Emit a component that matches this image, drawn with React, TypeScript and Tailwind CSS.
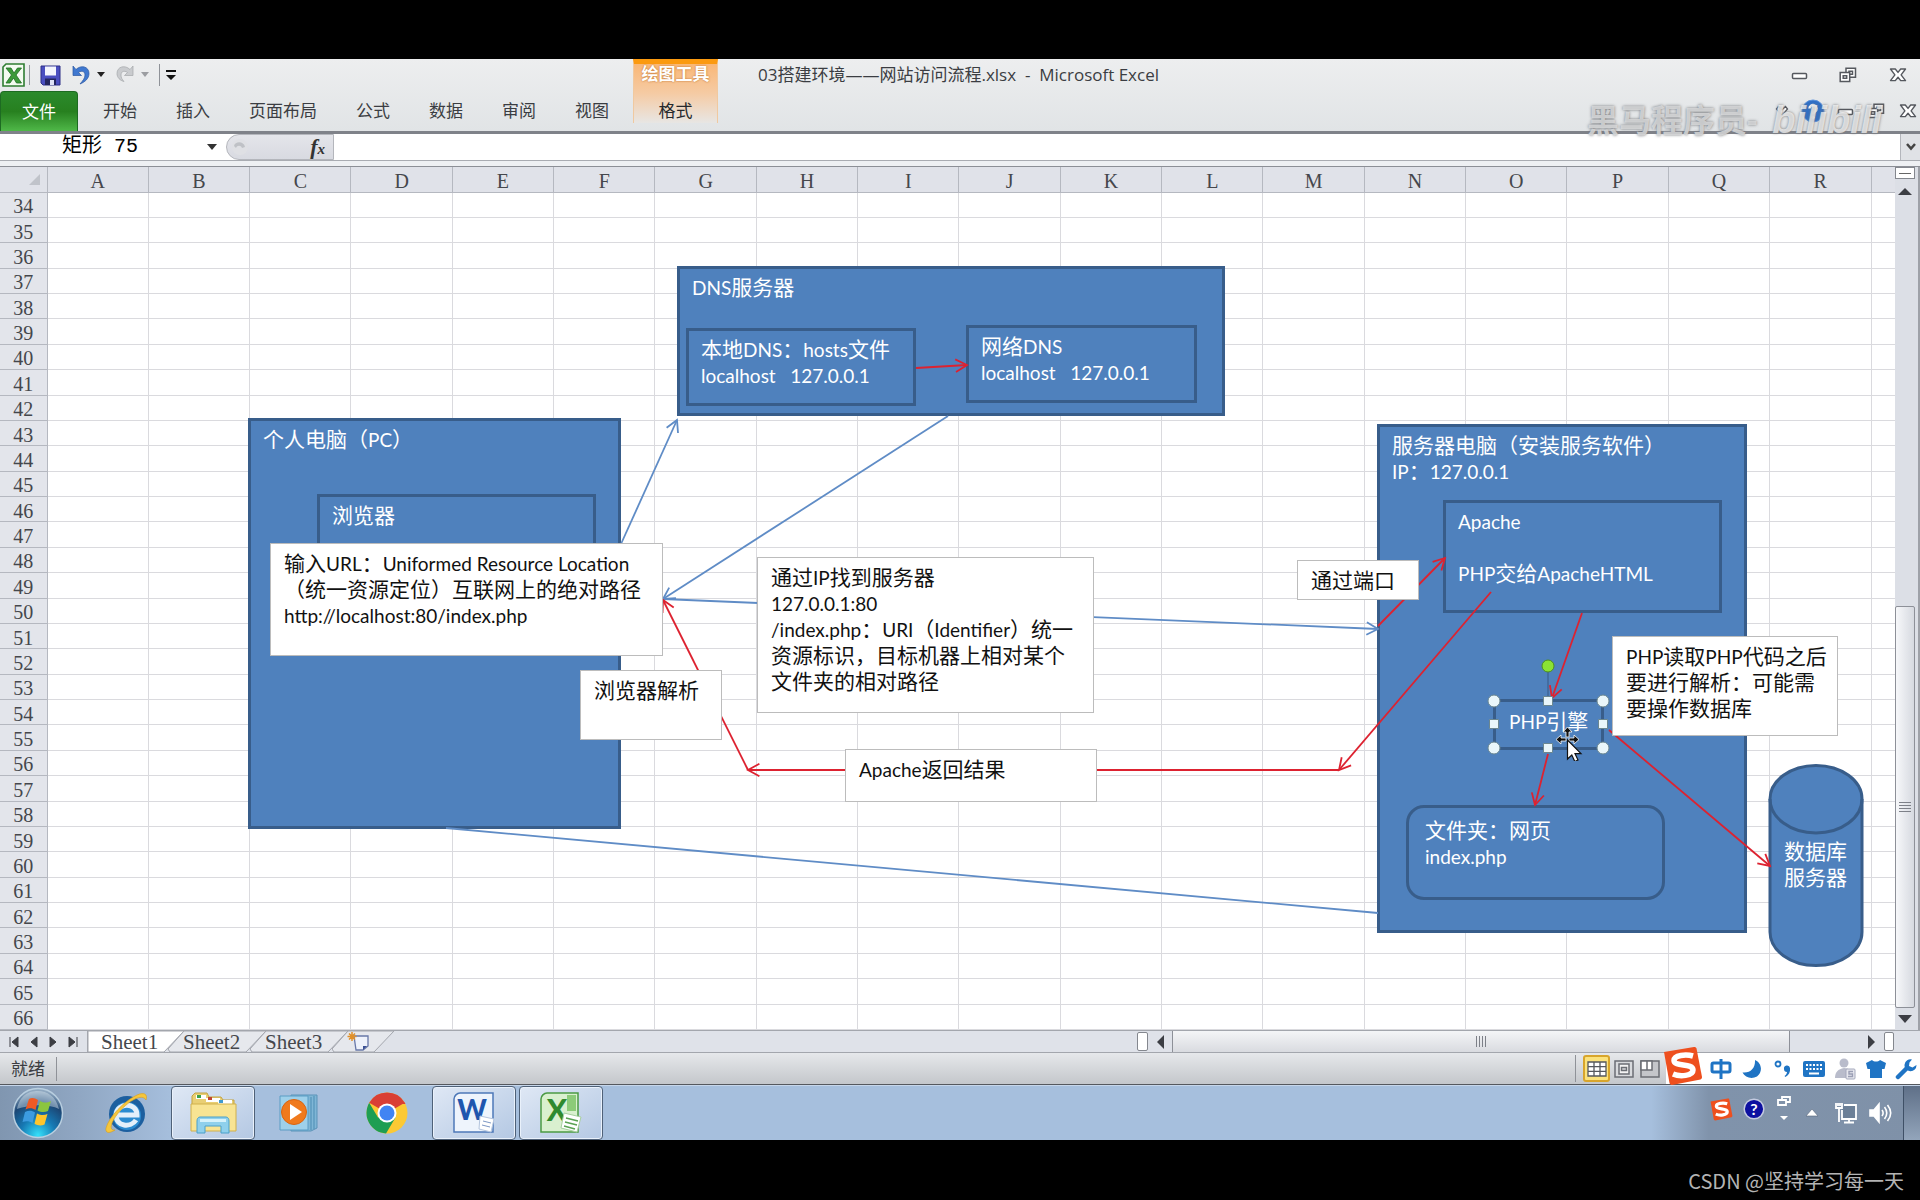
import React from "react";

const UI = "font-['Open_Sans','Noto_Sans_CJK_SC',sans-serif]";
const SERIF = "font-['Liberation_Serif','Noto_Sans_CJK_SC',serif]";
const SHAPE = "font-['Lato','Noto_Sans_CJK_SC',sans-serif]";

const COLUMNS = "ABCDEFGHIJKLMNOPQR".split("");
const ROWS = Array.from({ length: 33 }, (_, i) => 34 + i);
const TABS = ["开始", "插入", "页面布局", "公式", "数据", "审阅", "视图"];

/* ---------- window buttons ---------- */

function MinIcon() {
  return (
    <svg width="18" height="16" viewBox="0 0 18 16" fill="#fff" stroke="#55585e" strokeWidth="1.5">
      <rect x="1.5" y="6.5" width="14" height="5" rx="1" />
    </svg>
  );
}

function RestoreIcon() {
  return (
    <svg width="18" height="16" viewBox="0 0 18 16" fill="#fff" stroke="#55585e" strokeWidth="1.5">
      <path d="M7 1.2h9.5v9H7z" />
      <path d="M10 4.2h3.5v3H10z" />
      <path d="M1.2 5.5h9.5v9H1.2z" />
      <path d="M4.2 8.7h3.5v2.6H4.2z" />
    </svg>
  );
}

function CloseIcon() {
  return (
    <svg width="18" height="16" viewBox="0 0 18 16" fill="#fff" stroke="#55585e" strokeWidth="1.4" strokeLinejoin="round">
      <path d="M1.5 2h4.8L9 5.4 11.7 2h4.8l-4.4 5.8 4.4 5.8h-4.8L9 10.2l-2.7 3.4H1.5l4.4-5.8z" />
    </svg>
  );
}

function IconButton({ label, className = "", children }: { label: string; className?: string; children: React.ReactNode }) {
  return (
    <button aria-label={label} className={`flex shrink-0 items-center justify-center ${className}`}>
      {children}
    </button>
  );
}

/* ---------- ribbon ---------- */

function QuickAccess() {
  return (
    <div className="flex h-[32px] items-center pl-[2px]">
      <svg width="23" height="24" viewBox="0 0 23 24">
        <path d="M4 1h18v22H1V4z" fill="#f4fbf1" stroke="#2f7d32" strokeWidth="1.6" />
        <path d="M4 5h5l3 5 3.5-5h4L14 12l5.5 8h-5L11.500 15 8 20H4l5.500-8z" fill="#3d9a3a" stroke="#1f6d24" strokeWidth=".8" />
      </svg>
      <span className="ml-1 h-5 w-px bg-[#9a9da3]" />
      <IconButton label="保存" className="ml-[10px]">
        <svg width="21" height="21" viewBox="0 0 21 21">
          <path d="M1 1h19v19H3l-2-2z" fill="#4a4fc0" stroke="#2c2f86" />
          <path d="M5 1.500h11v9H5z" fill="#f3f5fd" />
          <path d="M5 13.500h11V20H5z" fill="#23265e" />
          <path d="M10 15h4v5h-4z" fill="#dfe3f6" />
        </svg>
      </IconButton>
      <IconButton label="撤消" className="ml-[11px]">
        <svg width="18" height="22" viewBox="0 0 18 22">
          <path d="M1 2v9.500h8.500L6.500 8.500C10 6 13 7.500 13 11c0 3-2 5.500-5 9 5-2 9-5.500 9-10.500C17 2.500 9 .5 4 5.500z" fill="#3f78d0" stroke="#2a56a0" strokeWidth=".7" />
        </svg>
      </IconButton>
      <IconButton label="撤消列表" className="ml-[6px]">
        <svg width="10" height="8" viewBox="0 0 10 8"><path d="M1 1h8L5 6z" fill="#222" /></svg>
      </IconButton>
      <IconButton label="恢复" className="ml-[10px]">
        <svg width="18" height="22" viewBox="0 0 18 22">
          <path d="M17 2v9.500H8.500l3-3C8 6 5 7.500 5 11c0 2.500 1 4.500 3 6.500-4-1-7-4-7-8C1 2.500 9 .5 14 5.500z" fill="#c9cbce" stroke="#a5a7ab" strokeWidth=".7" />
        </svg>
      </IconButton>
      <IconButton label="恢复列表" className="ml-[6px]">
        <svg width="10" height="8" viewBox="0 0 10 8"><path d="M1 1h8L5 6z" fill="#9b9da1" /></svg>
      </IconButton>
      <span className="ml-[9px] h-[22px] w-px bg-[#8f9298]" />
      <IconButton label="自定义快速访问工具栏" className="ml-[5px]">
        <svg width="12" height="12" viewBox="0 0 12 12" fill="#111"><path d="M1 1h10v2H1zM1 6h10l-5 5z" /></svg>
      </IconButton>
    </div>
  );
}

function Ribbon() {
  return (
    <header className={`relative flex h-[75px] shrink-0 border-b-[3px] border-[#7f8289] bg-linear-to-b from-[#edeeef] to-[#e1e4e6] text-[17px] text-[#3b3d42] ${UI}`}>
      <div className="flex shrink-0 flex-col">
        <QuickAccess />
        <nav className="flex flex-1 items-stretch">
          <button className="mr-[5px] w-[78px] rounded-t-[4px] border border-b-0 border-[#1d6b22] bg-linear-to-b from-[#2b8a2c] via-[#27801f] to-[#4fb848] text-white">文件</button>
          {TABS.map((t) => (
            <button key={t} className="pl-5 pr-[19px]">{t}</button>
          ))}
        </nav>
      </div>
      <div className="ml-[5px] flex h-[64px] w-[85px] shrink-0 flex-col border-x border-[#f0c9a0] border-t-[5px] border-t-[#fb9a10] bg-linear-to-b from-[#f9b776] via-[#f5cba4] to-[#e7e6e4]">
        <span className="h-5 text-center font-bold leading-5 text-white [text-shadow:0_0_2px_#b5651d]">绘图工具</span>
        <button className="flex-1 pt-[14px] leading-6 text-[#26282c]">格式</button>
      </div>
      <div className="flex min-w-0 flex-1 flex-col">
        <div className="flex h-[32px] items-center">
          <h1 className="ml-10 flex-1 truncate whitespace-pre">03搭建环境——网站访问流程.xlsx  -  Microsoft Excel</h1>
          <IconButton label="最小化" className="mr-[30px]"><MinIcon /></IconButton>
          <IconButton label="向下还原" className="mr-8"><RestoreIcon /></IconButton>
          <IconButton label="关闭" className="mr-[13px]"><CloseIcon /></IconButton>
        </div>
        <div className="flex flex-1 items-center justify-end">
          <IconButton label="功能区最小化" className="mr-3">
            <svg width="14" height="14" viewBox="0 0 14 14" fill="#fff" stroke="#55585e" strokeWidth="1.300"><path d="M1.500 5l2-2.500L7 5.800l3.500-3.300 2 2.500L7 11.500z" /></svg>
          </IconButton>
          <IconButton label="帮助" className="mr-3">
            <svg width="24" height="24" viewBox="0 0 24 24">
              <circle cx="12" cy="12" r="11" fill="#2f6fc6" stroke="#5b92dc" />
              <path d="M8.500 9.500a3.500 3.500 0 1 1 5.500 3c-1.400.9-2 1.500-2 2.800" fill="none" stroke="#fff" strokeWidth="2.600" />
              <circle cx="12" cy="18.300" r="1.600" fill="#fff" />
            </svg>
          </IconButton>
          <IconButton label="最小化窗口" className="mr-[12px]"><MinIcon /></IconButton>
          <IconButton label="还原窗口" className="mr-[14px]"><RestoreIcon /></IconButton>
          <IconButton label="关闭窗口" className="mr-[3px]"><CloseIcon /></IconButton>
        </div>
      </div>
      <div className="pointer-events-none absolute right-[38px] top-[40px] flex items-start gap-[15px] whitespace-nowrap text-[#dedfe0]/80 [text-shadow:0_0_3px_#77797c]">
        <span className="text-[32px] font-bold leading-[42px]">黑马程序员-</span>
        <span className="font-['Liberation_Sans',sans-serif] text-[38px] font-bold italic leading-[42px] text-white/70">bilibili</span>
      </div>
    </header>
  );
}

function FormulaBar() {
  return (
    <div className="flex h-[33px] shrink-0 border-b border-[#8c8f96] bg-[#eef0f3]">
      <div className="flex h-[27px] flex-1 border-b border-[#a9acb2] bg-white">
        <input aria-label="名称框" defaultValue="矩形 75" className="w-[200px] bg-transparent pl-[62px] font-['Liberation_Mono','Noto_Sans_CJK_SC',monospace] text-[20px] text-black outline-none" />
        <IconButton label="名称列表" className="w-[24px]">
          <svg width="12" height="8" viewBox="0 0 12 8"><path d="M1 1h10L6 7z" fill="#333" /></svg>
        </IconButton>
        <div className="ml-[2px] flex w-[108px] items-center justify-between rounded-l-full border border-[#b4b6bc] bg-linear-to-b from-[#e4e5ea] to-[#d8dae1] pl-1 pr-2">
          <svg width="20" height="20" viewBox="0 0 20 20"><circle cx="9" cy="10" r="8" fill="#dfe0e4" /><path d="M3 9c1-5 10-5 11 1l-3 1c-1-3-5-3-6 0z" fill="#bfc1c6" /></svg>
          <button aria-label="插入函数" className="font-['Liberation_Serif',serif] text-[22px] font-bold italic leading-none text-[#333]">f<span className="text-[15px]">x</span></button>
        </div>
        <input aria-label="编辑栏" className="min-w-0 flex-1 bg-white outline-none" />
        <IconButton label="展开编辑栏" className="w-5 border-l border-[#b4b6bc] bg-[#e0e2e6]">
          <svg width="12" height="10" viewBox="0 0 12 10" fill="none" stroke="#444" strokeWidth="2.500"><path d="M2 2l4 4.500L10 2" /></svg>
        </IconButton>
      </div>
    </div>
  );
}

/* ---------- drawing on the sheet ---------- */

function ShapeText({ lines }: { lines: string[] }) {
  return (
    <>
      {lines.map((line, i) => (
        <p key={i} className="h-[26px] whitespace-pre">
          {line.split(/([\x20-\x7e]+)/).map((part, j) =>
            /^[\x20-\x7e]+$/.test(part) ? <span key={j} className="text-[19px]">{part}</span> : part
          )}
        </p>
      ))}
    </>
  );
}

function Box({ at, pad = "px-[12px] pt-[5px]", lines = [] }: { at: string; pad?: string; lines?: string[] }) {
  return (
    <div className={`absolute border-[3px] border-[#385d8a] bg-[#4f81bd] text-white ${pad} ${at}`}>
      <ShapeText lines={lines} />
    </div>
  );
}

function Note({ at, lines }: { at: string; lines: string[] }) {
  return (
    <div className={`absolute border border-[#bcbcbc] bg-white px-[13px] pt-[6px] text-[#111] ${at}`}>
      <ShapeText lines={lines} />
    </div>
  );
}

type Line = { from: [number, number]; to: [number, number]; color: "red" | "blue"; head?: boolean };

const LINES: Line[] = [
  { from: [621, 352], to: [677, 228], color: "blue" },
  { from: [948, 224], to: [663, 407], color: "blue" },
  { from: [663, 407], to: [1378, 437], color: "blue" },
  { from: [446, 636], to: [1378, 721], color: "blue", head: false },
  { from: [916, 176], to: [967, 173], color: "red" },
  { from: [748, 578], to: [663, 408], color: "red" },
  { from: [1339, 578], to: [748, 578], color: "red" },
  { from: [1378, 434], to: [1445, 366], color: "red" },
  { from: [1491, 400], to: [1339, 578], color: "red" },
  { from: [1582, 421], to: [1552, 506], color: "red" },
  { from: [1548, 562], to: [1535, 613], color: "red" },
  { from: [1609, 538], to: [1770, 674], color: "red" },
];

function arrowHead([x1, y1]: [number, number], [x2, y2]: [number, number]) {
  const a = Math.atan2(y2 - y1, x2 - x1);
  const p = (d: number) => `${(x2 - 13 * Math.cos(a + d)).toFixed(1)} ${(y2 - 13 * Math.sin(a + d)).toFixed(1)}`;
  return `M${p(0.5)}L${x2} ${y2}L${p(-0.5)}`;
}

function Drawing() {
  return (
    <div className={`pointer-events-none absolute inset-x-0 bottom-0 top-[25px] overflow-hidden text-[21px] leading-[26px] ${SHAPE}`}>
      <Box at="left-[248px] top-[226px] h-[411px] w-[373px]" lines={["个人电脑（PC）"]} />
      <Box at="left-[317px] top-[302px] h-[120px] w-[279px]" lines={["浏览器"]} />
      <Box at="left-[677px] top-[74px] h-[150px] w-[548px]" lines={["DNS服务器"]} />
      <Box at="left-[686px] top-[136px] h-[78px] w-[230px]" lines={["本地DNS：hosts文件", "localhost   127.0.0.1"]} />
      <Box at="left-[966px] top-[133px] h-[78px] w-[231px]" lines={["网络DNS", "localhost   127.0.0.1"]} />
      <Box at="left-[1377px] top-[232px] h-[509px] w-[370px]" lines={["服务器电脑（安装服务软件）", "IP：127.0.0.1"]} />
      <Box at="left-[1443px] top-[308px] h-[113px] w-[279px]" lines={["Apache", "", "PHP交给ApacheHTML"]} />
      <Box at="left-[1406px] top-[613px] h-[95px] w-[259px] rounded-[18px]" pad="px-4 pt-[9px]" lines={["文件夹：网页", "index.php"]} />
      <Box at="left-[1493px] top-[507px] h-[51px] w-[111px]" pad="px-[13px] pt-[6px]" lines={["PHP引擎"]} />

      <svg className="absolute inset-0" width="1896" height="836" fill="none">
        <path d="M1770 607a46 33.500 0 0 1 92 0v133a46 33.500 0 0 1-92 0z" fill="#4f81bd" stroke="#385d8a" strokeWidth="3" />
        <path d="M1770 607a46 34 0 0 0 92 0" stroke="#385d8a" strokeWidth="3" />
        {LINES.map((l, i) => (
          <g key={i} stroke={l.color === "red" ? "#dd2230" : "#5f8cc6"} strokeWidth="1.800">
            <path d={`M${l.from[0]} ${l.from[1]}L${l.to[0]} ${l.to[1]}`} />
            {l.head !== false && <path d={arrowHead(l.from, l.to)} />}
          </g>
        ))}
        <path d="M1548 480v26" stroke="#3f6799" strokeWidth="1.500" />
        <circle cx="1548" cy="474" r="6" fill="#8be234" stroke="#4e8f1c" />
        <g fill="#e9f6fa" stroke="#6b8790">
          {[1494, 1603].map((x) => [509, 556].map((y) => <circle key={`${x}-${y}`} cx={x} cy={y} r="6" />))}
          <path d="M1543.500 504.500h9v9h-9zM1543.500 551.500h9v9h-9zM1489.500 527.500h9v9h-9zM1598.500 527.500h9v9h-9z" />
        </g>
      </svg>

      <div className="absolute left-[1784px] top-[646px] text-white">
        <ShapeText lines={["数据库", "服务器"]} />
      </div>
      <Note at="left-[270px] top-[351px] h-[113px] w-[393px]" lines={["输入URL：Uniformed Resource Location", "（统一资源定位）互联网上的绝对路径", "http://localhost:80/index.php"]} />
      <Note at="left-[580px] top-[478px] h-[70px] w-[142px]" lines={["浏览器解析"]} />
      <Note at="left-[757px] top-[365px] h-[156px] w-[337px]" lines={["通过IP找到服务器", "127.0.0.1:80", "/index.php：URI（Identifier）统一", "资源标识，目标机器上相对某个", "文件夹的相对路径"]} />
      <Note at="left-[1297px] top-[368px] h-[40px] w-[122px]" lines={["通过端口"]} />
      <Note at="left-[845px] top-[557px] h-[53px] w-[252px]" lines={["Apache返回结果"]} />
      <Note at="left-[1612px] top-[444px] h-[100px] w-[226px]" lines={["PHP读取PHP代码之后", "要进行解析：可能需", "要操作数据库"]} />

      <svg className="absolute left-[1555px] top-[535px]" width="30" height="34" viewBox="0 0 30 34">
        <g fill="#111" stroke="#fff" strokeWidth=".8">
          <path d="M12.500 0l4.500 5h-3v5h-3V5H8zM1 12.500l5-4.500v3h5v3H6v3zM24 12.500L19 8v3h-5v3h5v3z" />
        </g>
        <path d="M12.500 13v19l4.300-4 3 6.500 3.200-1.500-3-6.300h6z" fill="#fff" stroke="#111" strokeWidth="1.200" />
      </svg>
    </div>
  );
}

function Sheet() {
  return (
    <main className="relative flex min-h-0 flex-1 bg-white">
      <div className="min-w-0 flex-1">
        <table className={`h-full w-full table-fixed border-collapse text-[20px] leading-none text-[#45474c] ${SERIF}`}>
          <colgroup>
            <col className="w-[47px]" />
            {COLUMNS.map((c) => <col key={c} />)}
            <col className="w-[24px]" />
          </colgroup>
          <thead>
            <tr className="h-[25px] bg-[#e0e2e9]">
              <th aria-label="全选" className="border-b border-r border-[#b5b8c0] p-0">
                <svg className="ml-auto mr-[6px]" width="13" height="13" viewBox="0 0 13 13"><path d="M12 1v11H1z" fill="#c0c3ca" /></svg>
              </th>
              {COLUMNS.map((c) => (
                <th key={c} scope="col" className="border-b border-r border-[#b5b8c0] p-0 pt-[3px] font-normal">{c}</th>
              ))}
              <td className="border-b border-[#b5b8c0] p-0" />
            </tr>
          </thead>
          <tbody>
            {ROWS.map((r) => (
              <tr key={r}>
                <th scope="row" className="border-b border-r border-[#b5b8c0] bg-[#e3e5eb] p-0 pt-[3px] font-normal">{r}</th>
                {COLUMNS.map((c) => <td key={c} className="border-b border-r border-[#dadade] p-0" />)}
                <td className="border-b border-[#dadade] p-0" />
              </tr>
            ))}
          </tbody>
        </table>
      </div>
      <div className="flex w-[25px] shrink-0 flex-col border-r-2 border-[#9ea1a8] bg-[#dcdfe6] pr-[3px]">
        <div className="flex h-3 shrink-0 items-center justify-center border border-[#84878e] bg-white"><span className="h-px w-3 bg-[#666]" /></div>
        <IconButton label="向上滚动" className="h-6">
          <svg width="14" height="8" viewBox="0 0 14 8"><path d="M0 8l7-7 7 7z" fill="#3c3e44" /></svg>
        </IconButton>
        <div className="flex-[403]" />
        <div className="flex flex-[401] flex-col items-center justify-center gap-[2px] rounded-[2px] border border-[#8d9098] bg-linear-to-r from-[#f7f8fa] to-[#d6d9e0]">
          {[0, 1, 2, 3].map((i) => <span key={i} className="h-px w-3 bg-[#7d8088]" />)}
        </div>
        <IconButton label="向下滚动" className="h-[22px]">
          <svg width="14" height="8" viewBox="0 0 14 8"><path d="M0 0h14L7 8z" fill="#3c3e44" /></svg>
        </IconButton>
      </div>
      <Drawing />
    </main>
  );
}

/* ---------- bottom bars ---------- */

function SheetTab({ name, active = false }: { name: string; active?: boolean }) {
  return (
    <button className={`relative h-[22px] w-[82px] pl-[13px] text-left ${SERIF}`}>
      <svg className="absolute left-[-4px] top-0" width="102" height="22" viewBox="0 0 102 22">
        <path d={active ? "M4 0h96L80 21H4z" : "M18 0h82L80 21H4l-2-3z"} fill={active ? "#fff" : "#e6e8ed"} stroke="#a3a6ad" />
      </svg>
      <span className="relative text-[21px] leading-[22px] text-[#45474c]">{name}</span>
    </button>
  );
}

function SheetBar() {
  return (
    <div className="flex h-[23px] shrink-0 border-y border-[#a3a6ad] bg-[#dfe2e9]">
      <div className="flex w-[88px] shrink-0 items-center justify-around border-r border-[#a3a6ad] px-1">
        {["M3 2v10M11 2L5 7l6 5z", "M10 2L4 7l6 5z", "M4 2l6 5-6 5z", "M3 2l6 5-6 5zM11 2v10"].map((d, i) => (
          <IconButton key={i} label={["第一个", "上一个", "下一个", "最后一个"][i]}>
            <svg width="14" height="14" viewBox="0 0 14 14" fill="#3c3e44" stroke="#3c3e44" strokeWidth="1"><path d={d} /></svg>
          </IconButton>
        ))}
      </div>
      <div className="flex flex-1">
        <SheetTab name="Sheet1" active />
        <SheetTab name="Sheet2" />
        <SheetTab name="Sheet3" />
        <button aria-label="插入工作表" className="relative w-[60px]">
          <svg className="absolute left-[-2px] top-0" width="64" height="22" viewBox="0 0 64 22">
            <path d="M16 0h46L42 21H2l-2-3z" fill="#e6e8ed" stroke="#a3a6ad" />
            <path d="M22 5h14v10l-5 4h-7z" fill="#eef2fb" stroke="#6878a8" strokeWidth="1.300" />
            <path d="M35 15l-4 4v-4z" fill="#3d5296" />
            <path d="M20 1v9M15.500 5.500h9M17 2.500l6 6M23 2.500l-6 6" stroke="#e0902a" strokeWidth="1.500" />
          </svg>
        </button>
      </div>
      <div className="flex w-[783px] shrink-0 items-stretch">
        <span className="my-px w-[11px] rounded-[2px] border border-[#84878e] bg-white" />
        <IconButton label="向左滚动" className="w-[24px]">
          <svg width="8" height="14" viewBox="0 0 8 14"><path d="M8 0v14L1 7z" fill="#3c3e44" /></svg>
        </IconButton>
        <div className="flex flex-[617] items-center justify-center gap-[2px] border-x border-[#8d9098] bg-linear-to-b from-[#f4f5f7] to-[#d9dbe0]">
          {[0, 1, 2, 3].map((i) => <span key={i} className="h-[11px] w-px bg-[#7d8088]" />)}
        </div>
        <div className="flex-[70]" />
        <IconButton label="向右滚动" className="w-[24px]">
          <svg width="8" height="14" viewBox="0 0 8 14"><path d="M0 0v14l7-7z" fill="#3c3e44" /></svg>
        </IconButton>
        <span className="my-px mr-[26px] w-[10px] rounded-[2px] border border-[#84878e] bg-white" />
      </div>
    </div>
  );
}

function SogouLogo({ className, size }: { className?: string; size: number }) {
  return (
    <svg className={className} width={size} height={size} viewBox="0 0 40 40">
      <path d="M1 6L31 1c1 0 2 0 2.500 1.500L39 31c0 1-.5 2-1.500 2.500L9 39c-1 0-2-.5-2.500-2z" fill="#ee4f1e" />
      <path d="M30 10c-7-2-19-1-19 4.500 0 6.500 19 2.500 19 9.500 0 6-13 7-20 4" fill="none" stroke="#fff" strokeWidth="5.500" />
    </svg>
  );
}

function ImeBar() {
  return (
    <div className="relative flex h-full shrink-0 items-center bg-white pl-[39px] text-[#1f74c4]">
      <SogouLogo className="absolute bottom-[-2px] left-[-3px]" size={40} />
      <IconButton label="中文" className="w-[31px]">
        <svg width="22" height="22" viewBox="0 0 22 22" fill="none" stroke="currentColor" strokeWidth="3"><rect x="2" y="5" width="18" height="9" rx="1.500" /><path d="M11 1v20" /></svg>
      </IconButton>
      <IconButton label="半角" className="w-[31px]">
        <svg width="22" height="20" viewBox="0 0 22 20"><path d="M14 1c7 3 8 12 2 16.500-5.500 3-12 1-14.500-4 8 1 13-4.500 12.500-12.500z" fill="currentColor" /></svg>
      </IconButton>
      <IconButton label="标点" className="w-[31px]">
        <svg width="20" height="20" viewBox="0 0 20 20"><circle cx="5" cy="5" r="2.500" fill="none" stroke="currentColor" strokeWidth="1.800" /><path d="M11 10a3 3 0 0 1 6-1c.5 4-1 7-4.500 9l-1-1c1.500-1 2.500-2.500 2.500-4-2 0-3-1-3-3z" fill="currentColor" /></svg>
      </IconButton>
      <IconButton label="软键盘" className="w-[31px]">
        <svg width="24" height="18" viewBox="0 0 24 18"><rect x="1" y="1" width="22" height="16" rx="2" fill="currentColor" /><path d="M4 5h16M4 9h16" stroke="#fff" strokeWidth="2" strokeDasharray="2 1.500" /><path d="M7 13.500h10" stroke="#fff" strokeWidth="2" /></svg>
      </IconButton>
      <IconButton label="登录" className="w-[31px]">
        <svg width="22" height="22" viewBox="0 0 22 22" fill="#b9bccb"><circle cx="10" cy="5" r="4.500" /><path d="M1 20c0-6 3-9 9-10 5 0 8 3 9 10z" /><rect x="12" y="11" width="9" height="10" rx="1" fill="#e6e7ee" stroke="#a5a9bc" /><path d="M19 13.500h-4v2.500h3.500v2.500h-4.500" fill="none" stroke="#9a9eb4" strokeWidth="1.400" /></svg>
      </IconButton>
      <IconButton label="皮肤" className="w-[31px]">
        <svg width="22" height="20" viewBox="0 0 22 20"><path d="M7 1c2 2 6 2 8 0l6 3-1.500 6H17v9H5v-9H2.500L1 4z" fill="currentColor" /></svg>
      </IconButton>
      <IconButton label="工具" className="w-[29px]">
        <svg width="22" height="22" viewBox="0 0 22 22"><path d="M3 19L11 11" stroke="currentColor" strokeWidth="4.500" strokeLinecap="round" /><path d="M17 1.500a6 6 0 1 0 4.500 5.500l-4 2.500-3.500-1.500.5-3.500z" fill="currentColor" /></svg>
      </IconButton>
    </div>
  );
}

function StatusBar() {
  return (
    <div className={`flex h-[32px] shrink-0 items-center border-b border-[#55585e] bg-linear-to-b from-[#e6e8eb] to-[#c4c7cb] text-[#3b3d42] ${UI}`}>
      <span className="border-r border-[#8f9298] px-[11px] text-[17px] leading-6">就绪</span>
      <div className="ml-auto flex items-center border-l border-[#8f9298] pl-[7px]">
        <IconButton label="普通" className="mr-1 h-[27px] w-[27px] rounded-[3px] border-2 border-[#d8a52c] bg-[#fbe27c]">
          <svg width="20" height="16" viewBox="0 0 20 16" fill="#fff" stroke="#55585e" strokeWidth="1.300"><path d="M1 1h18v14H1zM1 5.600h18M1 10.300h18M7 1v14M13 1v14" /></svg>
        </IconButton>
        <IconButton label="页面布局视图" className="mr-[6px]">
          <svg width="20" height="18" viewBox="0 0 20 18" fill="#d8dadd" stroke="#6b6e74" strokeWidth="1.500"><path d="M1 1h18v16H1z" /><path d="M5 4h10v10H5z" fill="#f4f4f4" /><path d="M7.500 7.500h5v3h-5z" /></svg>
        </IconButton>
        <IconButton label="分页预览" className="mr-[6px]">
          <svg width="20" height="18" viewBox="0 0 20 18" fill="#c4c6ca" stroke="#6b6e74" strokeWidth="1.500"><path d="M1 1h18v16H1z" /><path d="M1 1h6v9H1zM7 1h5v9H7z" fill="#fff" /></svg>
        </IconButton>
      </div>
      <ImeBar />
    </div>
  );
}

function TaskButton({ label, open = false, children }: { label: string; open?: boolean; children: React.ReactNode }) {
  return (
    <button
      aria-label={label}
      className={`flex w-[84px] shrink-0 items-center justify-center rounded-[4px] ${open ? "border border-[#4f6178] bg-linear-to-br from-[#dfe8f5] to-[#b4c8e3] shadow-[inset_0_0_0_1px_#e9f1fb]" : ""}`}
    >
      {children}
    </button>
  );
}

function Taskbar() {
  return (
    <footer className="flex h-[55px] shrink-0 gap-[3px] border-t border-[#c6d6ea] bg-[linear-gradient(90deg,#8096b0_0%,#8fa6c2_4%,#a6bfdd_9%,#a6bfdd_86%,#8093ab_89%,#7f91a8_100%)]">
      <button aria-label="开始菜单" className="flex w-[81px] shrink-0 items-center pl-[12px]">
        <svg width="52" height="52" viewBox="0 0 52 52">
          <defs>
            <radialGradient id="orb" cx=".5" cy=".95" r=".9">
              <stop offset="0" stopColor="#35e0fa" />
              <stop offset=".4" stopColor="#1679b4" />
              <stop offset=".75" stopColor="#1c4674" />
              <stop offset="1" stopColor="#8fa8c0" />
            </radialGradient>
          </defs>
          <circle cx="26" cy="26" r="24.500" fill="url(#orb)" stroke="#b9cfe0" strokeWidth="1.500" />
          <path d="M5 22C8 8 17 4 26 4s18 5 21 18C36 16 16 18 5 22z" fill="#dce8f2" opacity=".45" />
          <path d="M17 12c3-2 6-1 9 1l-2.500 10c-3-2-6-2.500-10-.5z" fill="#ee5a24" />
          <path d="M28 14c4 2 7 2 11 0l-3 10c-3 1.500-7 1.500-10.500-.5z" fill="#8bc53f" />
          <path d="M13 25c4-1.800 7-1.500 10 .5L20.500 36c-3-2-6-2.500-10-1z" fill="#3c9be0" />
          <path d="M25 26.500c4 2 7 2 10.500.5l-3 10.500c-3.500 1.500-7 1-10-.8z" fill="#fdc52c" />
        </svg>
      </button>
      <TaskButton label="Internet Explorer">
        <svg width="48" height="46" viewBox="0 0 48 46">
          <circle cx="25" cy="24" r="18" fill="#1c5f9f" />
          <circle cx="25" cy="26" r="14" fill="#2b8bd0" />
          <path d="M14 25h21c0-13-20-13-21 0 0 12 15 13 20 5" fill="none" stroke="#e3effa" strokeWidth="5" />
          <path d="M44 10c2-6-2-8-9-5C22 11 7 27 4 38c-1 5 3 6 9 2C6 41 9 31 18 21 27 11 40 3 44 10z" fill="#f6c63c" stroke="#d79d1d" strokeWidth=".6" />
        </svg>
      </TaskButton>
      <TaskButton label="资源管理器" open>
        <svg width="50" height="42" viewBox="0 0 50 42">
          <path d="M4 4l3-3h12l2 4h12l2 3h11v30H4z" fill="#e9cf74" stroke="#c3a341" />
          <path d="M8 3h10v4H8zM18 6h14v4H18zM30 8h14v4H30z" fill="#fff" />
          <path d="M9 3h4v3H9z" fill="#3ba14a" /><path d="M20 5h4v3h-4z" fill="#c2452f" /><path d="M31 8h4v3h-4z" fill="#3f9ad0" />
          <path d="M3 12h45v27H3z" fill="#f8e493" stroke="#d0b04c" />
          <path d="M9 41V29c0-2 1-4 3-4h26c2 0 3 2 3 4v12h-8V34H17v7z" fill="#8fd0ec" stroke="#4aa0c9" />
          <path d="M12 27h26v3H12z" fill="#d6f2fb" />
        </svg>
      </TaskButton>
      <TaskButton label="媒体播放器">
        <svg width="42" height="38" viewBox="0 0 42 38">
          <path d="M12 1h26v33l-6 3H12z" fill="#7fb6d6" stroke="#5b93b8" />
          <path d="M1 2h28v34H1z" fill="#9ed0ea" stroke="#5b9cc4" />
          <path d="M32 3v33M35 2v33" stroke="#4d8cb3" />
          <circle cx="15" cy="18" r="12.500" fill="#f07a1d" stroke="#d9640f" />
          <path d="M11 10l12 8-12 8z" fill="#fff" />
        </svg>
      </TaskButton>
      <TaskButton label="Chrome">
        <svg width="42" height="42" viewBox="0 0 42 42">
          <circle cx="21" cy="21" r="20.500" fill="#fcc934" />
          <path d="M21 21L3.200 10.800a20.500 20.500 0 0 1 35.600 0z" fill="#d93f35" />
          <path d="M3.200 10.800A20.500 20.500 0 0 0 20 41.500l9.500-16L21 21 12 25.500z" fill="#1e9e52" />
          <path d="M21 12h18.400a20.500 20.500 0 0 0-.6-1.200L21 9z" fill="#d93f35" />
          <circle cx="21" cy="21" r="9.500" fill="#fff" />
          <circle cx="21" cy="21" r="7.500" fill="#4184f3" />
        </svg>
      </TaskButton>
      <TaskButton label="Word" open>
        <svg width="44" height="42" viewBox="0 0 44 42">
          <path d="M8 1h33v39H2V7c0-3 3-6 6-6z" fill="#eef4fc" stroke="#4d78b8" strokeWidth="1.500" />
          <text x="20" y="28" textAnchor="middle" fontSize="28" fontWeight="900" fontFamily="Lato" fill="#1f56ae">W</text>
          <path d="M28 24l14 3-3 13-12-3z" fill="#fff" stroke="#b4c5de" />
          <path d="M31 29l8 2M30 33l8 2" stroke="#7d98c5" />
        </svg>
      </TaskButton>
      <TaskButton label="Excel" open>
        <svg width="44" height="42" viewBox="0 0 44 42">
          <path d="M8 1h31v39H2V7c0-3 3-6 6-6z" fill="#d9f0cf" stroke="#4b9a44" strokeWidth="1.500" />
          <path d="M28 3h9v16h-9z" fill="#8ccb79" />
          <text x="18" y="29" textAnchor="middle" fontSize="30" fontWeight="900" fontFamily="Lato" fill="#2f8a2f">X</text>
          <path d="M25 21l17 4-4 15-16-4z" fill="#fff" stroke="#a7cfa0" />
          <path d="M27 26l12 3M26 30l12 3M25 34l11 3" stroke="#5aa253" strokeWidth="1.500" />
        </svg>
      </TaskButton>
      <div className="ml-auto flex items-center pb-1">
        <IconButton label="搜狗输入法" className="mr-[10px] pb-1"><SogouLogo size={23} /></IconButton>
        <IconButton label="帮助中心" className="mr-3 pb-1">
          <svg width="22" height="22" viewBox="0 0 22 22"><circle cx="11" cy="11" r="9.800" fill="#0d10a0" stroke="#c4cbe0" strokeWidth="1.500" /><text x="11" y="17" textAnchor="middle" fontSize="16" fontWeight="700" fontFamily="Lato" fill="#fff">?</text></svg>
        </IconButton>
        <IconButton label="语言栏选项" className="mr-[14px] pb-1">
          <svg width="14" height="26" viewBox="0 0 14 26" fill="none" stroke="#fff" strokeWidth="1.800"><path d="M5 3.500V1h8v5H9M1 4h8v5H1z" /><path d="M3 20h8l-4 4z" fill="#fff" stroke="none" /></svg>
        </IconButton>
        <IconButton label="显示隐藏的图标" className="mr-[15px] pt-1">
          <svg width="14" height="10" viewBox="0 0 14 10"><path d="M1 8h12L7 1z" fill="#fff" stroke="#55657a" strokeWidth=".6" /></svg>
        </IconButton>
        <IconButton label="网络" className="mr-[10px] pt-1">
          <svg width="24" height="24" viewBox="0 0 24 24" fill="none" stroke="#fff" strokeWidth="1.800"><path d="M10 4h12v14H8V9" fill="#6b7f97" /><path d="M15 18v3M10 21.500h10M2 2v5h6V2M5 7v14M4 2v3M6 2v3" /></svg>
        </IconButton>
        <IconButton label="音量" className="mr-3 pt-1">
          <svg width="24" height="22" viewBox="0 0 24 22" fill="none" stroke="#fff" strokeWidth="1.600"><path d="M2 8h4l5-6v18l-5-6H2z" fill="#fff" /><path d="M14 8c1.500 2 1.500 4 0 6M16.500 5c3 4 3 8 0 12M19.500 3c4 5 4 11 0 16" /></svg>
        </IconButton>
        <button aria-label="显示桌面" className="-mb-1 -ml-px w-[17px] self-stretch border-l border-[#3f5066] bg-linear-to-b from-[#5f7088] to-[#93a5bb]" />
      </div>
    </footer>
  );
}

export default function App() {
  return (
    <div className="flex h-screen w-full flex-col overflow-hidden bg-black pt-[59px]">
      <Ribbon />
      <FormulaBar />
      <Sheet />
      <SheetBar />
      <StatusBar />
      <Taskbar />
      <p className="flex h-[60px] shrink-0 items-center justify-end pr-4 pt-[22px] font-['Noto_Sans_CJK_SC',sans-serif] text-[20px] text-[#b4b4b4]">CSDN @坚持学习每一天</p>
    </div>
  );
}
